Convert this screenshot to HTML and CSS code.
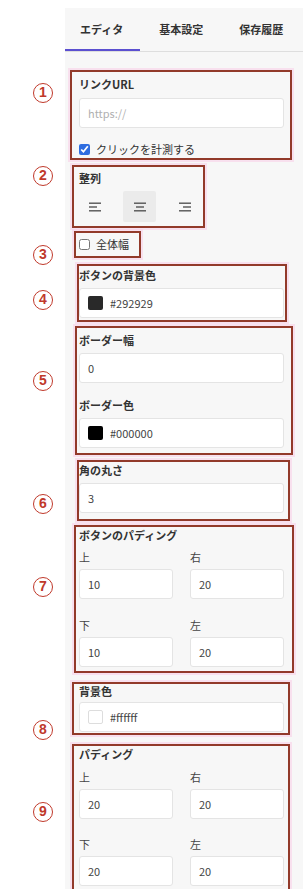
FILE: index.html
```html
<!DOCTYPE html>
<html lang="ja">
<head>
<meta charset="utf-8">
<link rel="stylesheet" href="styles.css">
</head>
<body>
<div class="page">
  <div class="marks">
    <span class="mark m1">1</span>
    <span class="mark m2">2</span>
    <span class="mark m3">3</span>
    <span class="mark m4">4</span>
    <span class="mark m5">5</span>
    <span class="mark m6">6</span>
    <span class="mark m7">7</span>
    <span class="mark m8">8</span>
    <span class="mark m9">9</span>
  </div>
  <div class="panel">
    <div class="tabs">
      <div class="tab t1 active">エディタ</div>
      <div class="tab t2">基本設定</div>
      <div class="tab t3">保存履歴</div>
    </div>

    <div class="box b1">
      <div class="label">リンクURL</div>
      <div class="input full placeholder">https://</div>
      <label class="check row-check"><input type="checkbox" checked><span>クリックを計測する</span></label>
    </div>

    <div class="box b2">
      <div class="label lab2">整列</div>
      <div class="aligns">
        <div class="abtn">
          <svg width="12" height="10" viewBox="0 0 12 10"><rect x="0" y="0.5" width="12" height="1.4" fill="#555"/><rect x="0" y="4.3" width="8" height="1.4" fill="#555"/><rect x="0" y="8.1" width="12" height="1.4" fill="#555"/></svg>
        </div>
        <div class="abtn on">
          <svg width="12" height="10" viewBox="0 0 12 10"><rect x="0" y="0.5" width="12" height="1.4" fill="#555"/><rect x="2" y="4.3" width="8" height="1.4" fill="#555"/><rect x="0" y="8.1" width="12" height="1.4" fill="#555"/></svg>
        </div>
        <div class="abtn">
          <svg width="12" height="10" viewBox="0 0 12 10"><rect x="0" y="0.5" width="12" height="1.4" fill="#555"/><rect x="4" y="4.3" width="8" height="1.4" fill="#555"/><rect x="0" y="8.1" width="12" height="1.4" fill="#555"/></svg>
        </div>
      </div>
    </div>

    <div class="box b3">
      <label class="check"><input type="checkbox"><span>全体幅</span></label>
    </div>

    <div class="box b4">
      <div class="label">ボタンの背景色</div>
      <div class="input full color"><span class="sw sw-dark"></span>#292929</div>
    </div>

    <div class="box b5">
      <div class="label">ボーダー幅</div>
      <div class="input full">0</div>
      <div class="label lab-gap">ボーダー色</div>
      <div class="input full color"><span class="sw sw-black"></span>#000000</div>
    </div>

    <div class="box b6">
      <div class="label">角の丸さ</div>
      <div class="input full">3</div>
    </div>

    <div class="box b7">
      <div class="label">ボタンのパディング</div>
      <div class="grid2">
        <div class="cell"><div class="sub">上</div><div class="input half">10</div></div>
        <div class="cell"><div class="sub">右</div><div class="input half">20</div></div>
        <div class="cell"><div class="sub">下</div><div class="input half">10</div></div>
        <div class="cell"><div class="sub">左</div><div class="input half">20</div></div>
      </div>
    </div>

    <div class="box b8">
      <div class="label lab8">背景色</div>
      <div class="input full color"><span class="sw sw-white"></span>#ffffff</div>
    </div>

    <div class="box b9">
      <div class="label">パディング</div>
      <div class="grid2">
        <div class="cell"><div class="sub">上</div><div class="input half">20</div></div>
        <div class="cell"><div class="sub">右</div><div class="input half">20</div></div>
        <div class="cell"><div class="sub">下</div><div class="input half">20</div></div>
        <div class="cell"><div class="sub">左</div><div class="input half">20</div></div>
      </div>
    </div>
  </div>
</div>
</body>
</html>
```

FILE: styles.css
```css
* { box-sizing: border-box; }
html, body { margin: 0; padding: 0; background: #fff; }
body {
  font-family: "Noto Sans CJK JP", "Noto Sans", sans-serif;
  font-size: 11px;
  color: #333;
  height: 889px;
  overflow: hidden;
}
.page { position: relative; height: 889px; }

/* annotation markers */
.marks { position: absolute; left: 0; top: 0; width: 65px; height: 889px; }
.mark {
  position: absolute;
  left: 33px;
  width: 20px;
  height: 20px;
  border: 1.5px solid #c0392b;
  border-radius: 50%;
  color: #c0392b;
  font-family: "Liberation Sans", sans-serif;
  font-weight: bold;
  font-size: 14px;
  line-height: 17px;
  text-align: center;
}
.m1 { top: 75px; }
.m2 { top: 158px; }
.m3 { top: 237px; }
.m4 { top: 282px; }
.m5 { top: 363px; }
.m6 { top: 486px; }
.m7 { top: 569px; }
.m8 { top: 712px; }
.m9 { top: 794px; }

.panel {
  margin-left: 65px;
  margin-top: 8px;
  background: #f7f7f7;
  height: 881px;
  display: flex;
  flex-direction: column;
  align-items: flex-start;
}

.tabs {
  display: flex;
  width: 100%;
  height: 44px;
  border-bottom: 1px solid #dedede;
}
.tab {
  flex: none;
  white-space: nowrap;
  font-size: 11px;
  font-weight: bold;
  color: #333;
  line-height: 42px;
  height: 43px;
}
.t1 { padding: 0 17px 0 15px; }
.t2 { padding: 0 18px 0 19px; }
.t3 { padding: 0 18px; }
.tab.active { box-shadow: inset 0 -2px 0 #5b4fd0; }

.box {
  border: 2px solid #923a2a;
  box-shadow: 0 0 0 2px rgba(250, 205, 232, 0.55);
  flex: none;
}
.label { font-weight: bold; line-height: 16px; color: #333; white-space: nowrap; }
.sub { line-height: 16px; color: #444; }

.input {
  background: #fff;
  border: 1px solid #e4e4e4;
  border-radius: 3px;
  height: 30px;
  display: flex;
  align-items: center;
  padding-left: 8px;
  color: #444;
  font-size: 11px;
}
.input.full { width: 205px; }
.input.half { width: 94px; }
.placeholder { color: #b0b0b0; }
.color { gap: 7px; }
.sw { width: 15px; height: 14px; border-radius: 2px; display: inline-block; }
.sw-dark { background: #292929; }
.sw-black { background: #000; }
.sw-white { background: #fff; border: 1px solid #ddd; }

.check { display: flex; align-items: center; gap: 6px; height: 16px; color: #333; white-space: nowrap; }
.check input { margin: 0; width: 11px; height: 11px; accent-color: #2f6de0; }

.b1 { margin: 18px 0 0 5px; width: 222px; padding: 4px 0 1px 7px; }
.b1 .input { margin-top: 6px; }
.row-check { margin-top: 13px; }

.b2 { margin: 5px 0 0 7px; width: 133px; padding: 3px 0 4px 4px; }
.lab2 { padding-left: 1px; }
.aligns { display: flex; gap: 12px; margin-top: 5px; }
.abtn {
  width: 33px; height: 31px;
  display: flex; align-items: center; justify-content: center;
  border-radius: 2px;
}
.abtn.on { background: #ebebeb; }

.b3 { margin: 3px 0 0 9px; width: 67px; padding: 3px 0 4px 3px; }

.b4 { margin: 6px 0 0 12px; width: 210px; padding: 1px 0 2px 0; }
.b4 .input { margin-top: 5px; }

.b5 { margin: 4px 0 0 10px; width: 218px; padding: 4px 0 5px 2px; }
.b5 .input { margin-top: 5px; }
.lab-gap { margin-top: 14px; }

.b6 { margin: 5px 0 0 12px; width: 213px; padding: 0 0 6px 0; }
.b6 .input { margin-top: 5px; }

.b7 { margin: 4px 0 0 9px; width: 220px; padding: 0 0 4px 3px; }
.grid2 {
  display: grid;
  grid-template-columns: 94px 94px;
  column-gap: 17px;
  row-gap: 18px;
  margin-top: 6px;
}
.cell .input { margin-top: 4px; }

.b8 { margin: 9px 0 0 7px; width: 218px; padding: 0 0 1px 5px; }
.lab8 { line-height: 14px; }
.b8 .input { margin-top: 4px; }

.b9 { margin: 9px 0 0 7px; width: 218px; padding: 0 0 4px 5px; }
.b9 .grid2 { margin-top: 7px; row-gap: 17px; }
```
